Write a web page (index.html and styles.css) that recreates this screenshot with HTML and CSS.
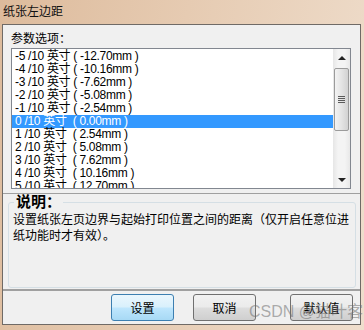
FILE: index.html
```html
<!DOCTYPE html>
<html>
<head>
    <meta charset="UTF-8">
    <title>纸张左边距</title>
    <link rel="stylesheet" href="styles.css">
</head>
<body>
    <div class="titlebar">纸张左边距</div>
    <div class="window">
        <div class="options">
            <div class="label">参数选项：</div>
            <div class="listbox">
                <ul class="items">
                    <li>-5 /10 英寸 ( -12.70mm )</li>
                    <li>-4 /10 英寸 ( -10.16mm )</li>
                    <li>-3 /10 英寸 ( -7.62mm )</li>
                    <li>-2 /10 英寸 ( -5.08mm )</li>
                    <li>-1 /10 英寸 ( -2.54mm )</li>
                    <li class="selected">0 /10 英寸  ( 0.00mm )</li>
                    <li>1 /10 英寸  ( 2.54mm )</li>
                    <li>2 /10 英寸  ( 5.08mm )</li>
                    <li>3 /10 英寸  ( 7.62mm )</li>
                    <li>4 /10 英寸  ( 10.16mm )</li>
                    <li>5 /10 英寸  ( 12.70mm )</li>
                </ul>
                <div class="scrollbar">
                    <div class="arrow up"></div>
                    <div class="track">
                        <div class="thumb"><span class="grip"></span></div>
                    </div>
                    <div class="arrow down"></div>
                </div>
            </div>
        </div>
        <fieldset class="note">
            <legend>说明：</legend>
            <p>设置纸张左页边界与起始打印位置之间的距离（仅开启任意位进纸功能时才有效）。</p>
        </fieldset>
        <div class="actions">
            <button class="btn btn-default">设置</button>
            <button class="btn">取消</button>
            <button class="btn btn-reset">默认值</button>
        </div>
    </div>
    <div class="watermark">CSDN @猫叶客</div>
</body>
</html>
```
FILE: styles.css
```css
* {
    box-sizing: border-box;
}

body {
    margin: 0;
    width: 364px;
    height: 330px;
    overflow: hidden;
    position: relative;
    background: linear-gradient(100deg, #ddbb9c 0%, #e6cbb2 45%, #efdecd 100%);
    font-family: "Liberation Sans", "Noto Sans CJK SC", sans-serif;
    font-size: 12px;
    color: #000;
}

.titlebar {
    height: 24px;
    line-height: 24px;
    padding-left: 3px;
    font-size: 12px;
    color: #111;
}

.window {
    margin-left: 2px;
    width: 359px;
    height: 301px;
    border: 1px solid #6f6a66;
    background-color: #f0f0f0;
}

.options {
    height: 169px;
    padding: 6px 0 0 8px;
    border-bottom: 1px solid #a0a0a0;
}

.label {
    height: 16px;
    line-height: 16px;
}

.listbox {
    display: flex;
    width: 340px;
    height: 141px;
    margin-top: 1px;
    border: 1px solid #828790;
    background-color: #fff;
    overflow: hidden;
}

.items {
    flex: 1;
    margin: 0;
    padding: 1px 0 0 0;
    list-style: none;
    overflow: hidden;
}

.items li {
    height: 13px;
    line-height: 13px;
    padding-left: 3px;
    letter-spacing: -0.3px;
    white-space: pre;
}

.items li.selected {
    background-color: #3399ff;
    color: #fff;
}

.scrollbar {
    width: 17px;
    display: flex;
    flex-direction: column;
    background: linear-gradient(to right, #e6e6e6, #f4f4f4 30%, #f4f4f4 70%, #e8e8e8);
}

.arrow {
    height: 17px;
    display: flex;
    align-items: center;
    justify-content: center;
}

.arrow::after {
    content: "";
    width: 0;
    height: 0;
    border-left: 4px solid transparent;
    border-right: 4px solid transparent;
}

.arrow.up::after {
    border-bottom: 4px solid #222;
}

.arrow.down::after {
    border-top: 4px solid #222;
}

.track {
    flex: 1;
    padding: 2px 1px 0 1px;
}

.thumb {
    height: 63px;
    border: 1px solid #9b9b9b;
    border-radius: 2px;
    background: linear-gradient(to right, #f3f3f3, #e4e4e4 50%, #d2d2d2);
    display: flex;
    align-items: center;
    justify-content: center;
}

.grip {
    width: 7px;
    height: 8px;
    background: repeating-linear-gradient(to bottom, #5a5a5a 0, #5a5a5a 1px, transparent 1px, transparent 2px);
}

.note {
    margin: 0 4px 1px 5px;
    height: 94px;
    padding: 0 4px;
    border: 1px solid #d5dfe5;
    border-radius: 3px;
    min-width: 0;
}

.note legend {
    margin-left: 1px;
    padding: 0 2px;
    height: 16px;
    line-height: 16px;
    font-size: 15px;
    font-weight: bold;
}

.note p {
    margin: 0;
    padding-top: 2px;
    line-height: 16px;
}

.actions {
    display: flex;
    justify-content: flex-end;
    padding: 3px 7px 0 0;
    border-top: 2px solid #a0a0a0;
}

.btn {
    width: 63px;
    height: 27px;
    padding: 0;
    border: 1px solid #707070;
    border-radius: 3px;
    background: linear-gradient(to bottom, #f2f2f2 0%, #ebebeb 48%, #dddddd 52%, #cfcfcf 100%);
    font-family: "Liberation Sans", "Noto Sans CJK SC", sans-serif;
    font-size: 12px;
    color: #000;
}

.btn-default {
    border-color: #3c7fb1;
    background: linear-gradient(to bottom, #eaf6fd 0%, #d9f0fc 48%, #bee6fd 52%, #a7d9f5 100%);
}

.btn + .btn {
    margin-left: 19px;
}

.btn + .btn-reset {
    margin-left: 34px;
}

.watermark {
    position: absolute;
    left: 249px;
    top: 302px;
    font-size: 16px;
    line-height: 20px;
    color: rgba(110, 110, 110, 0.55);
    white-space: nowrap;
}
```
